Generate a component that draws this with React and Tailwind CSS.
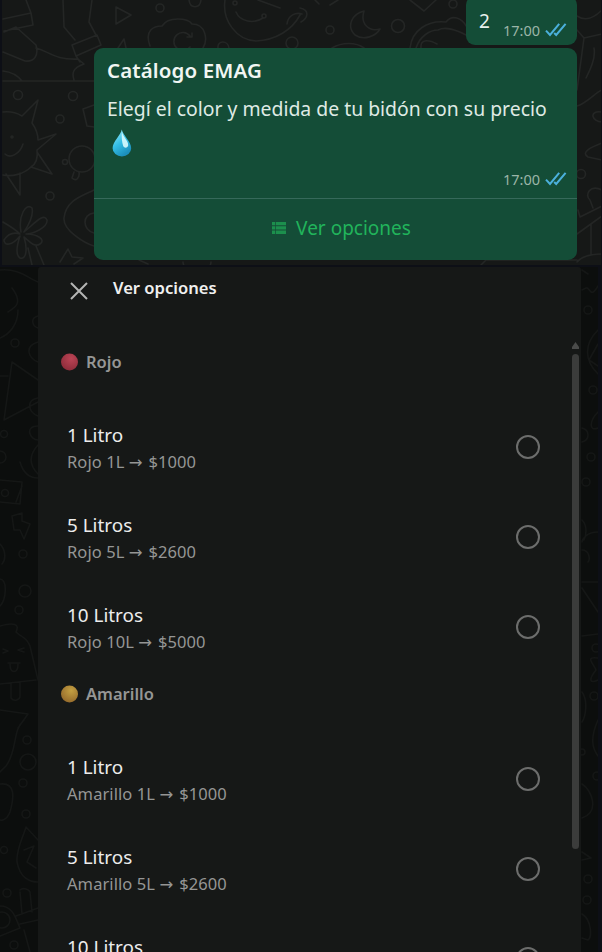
const SECTIONS = [
  {
    name: "Rojo",
    ball: ["#bb4455", "#8c2b39"],
    items: [
      ["1 Litro", "Rojo 1L", "$1000"],
      ["5 Litros", "Rojo 5L", "$2600"],
      ["10 Litros", "Rojo 10L", "$5000"],
    ],
  },
  {
    name: "Amarillo",
    ball: ["#c4a042", "#94692b"],
    items: [
      ["1 Litro", "Amarillo 1L", "$1000"],
      ["5 Litros", "Amarillo 5L", "$2600"],
      ["10 Litros", "Amarillo 10L", "$5000"],
    ],
  },
];

function Checks() {
  return (
    <svg width="22" height="14" viewBox="0 0 22 14" fill="none" stroke="#4bb0dc" strokeWidth="2">
      <path d="M1 7.600 5 12 14.200 .8M9.200 10 11.200 12 20.600 .8" />
    </svg>
  );
}

function Time() {
  return (
    <div className="flex items-center gap-[5px]">
      <span className="text-[14.5px] leading-5 text-[#9bb5a8]">17:00</span>
      <Checks />
    </div>
  );
}

function Drop() {
  return (
    <svg width="20" height="28" viewBox="0 0 20 28">
      <defs>
        <linearGradient id="drop" x1="0" y1="0" x2="0.5" y2="1">
          <stop offset="0" stopColor="#a5eef9" />
          <stop offset="0.55" stopColor="#35bfe6" />
          <stop offset="1" stopColor="#1c8fbb" />
        </linearGradient>
      </defs>
      <path d="M9.800 0.500C9 6 .6 12.500 .6 19.200a9.300 8.200 0 0 0 18.600 0C19.200 12.500 10.600 6 9.800 .5Z" fill="url(#drop)" />
      <path d="M9.900 2.500c.6 5 6.600 9 6.300 13.800-.4 3-3.900 3.300-5 .8-1.200-3.600-1.900-9-1.300-14.600Z" fill="#d9f9fd" opacity=".9" />
    </svg>
  );
}

function Doodles() {
  return (
    <svg className="[grid-area:1/1]" width="602" height="952" viewBox="0 0 602 952" fill="none" strokeWidth="1.6" strokeLinecap="round" strokeLinejoin="round">
      <rect width="602" height="265" fill="#161817" />
      <rect y="265" width="602" height="687" fill="#0c0e0d" />
      <g stroke="#242625">
        <path d="M3 19 31 13 33 25 4 31M31 13 26 0M4 32 16 27 36 45C39 56 34 62 25 61L3 52M63 0 64 27 75 40M92 0 89 22 96 35M72 45 97 35 101 45 76 56ZM76 56 80 62M36 48C50 52 55 60 78 59M78 59 84 64C72 68 72 74 74 80M3 71C12 72 18 76 22 81M3 81H94" />
        <path d="M116 7 131 15 116 24ZM118 48 124 39 126 48M150 46C144 30 154 26 162 26 168 16 188 18 192 24 206 24 208 40 203 48M190 36A9 9 0 1 0 190 47M192 33V37H187M225 0C222 20 236 40 256 41 276 40 292 30 300 15M236 12C240 22 254 24 263 18M258 0 280 8M287 24C288 15 296 12 302 14M218 48C217 40 228 40 229 48" />
        <circle cx="160" cy="8" r="4" /><circle cx="292" cy="43" r="6" /><circle cx="264" cy="16" r="2" /><circle cx="235" cy="3" r="2" /><path d="M189 0C190 9 200 9 201 0" />
        <circle cx="18" cy="95" r="4.500" /><circle cx="73" cy="96" r="4.500" /><circle cx="60" cy="119" r="4" />
        <path d="M3 112C12 111 17 113 22 116L38 100 32 123C37 130 38 136 38 140L56 134 37 150C38 158 36 164 31 167L52 174 37 152M20 195 6 174M20 195 20 173M3 175C12 177 24 174 31 167M5 154C10 159 20 154 23 144M94 105 83 109 87 126 94 127" />
        <circle cx="12" cy="137" r="1" />
        <circle cx="82" cy="159" r="13" /><circle cx="65" cy="162" r="2.500" />
        <path d="M74 172 72 178C76 182 80 178 79 172M94 190C82 196 66 200 64 218 63 230 84 243 94 246M94 213C82 214 82 230 94 233M21 232C18 216 26 202 32 208 34 216 28 226 24 232 34 224 44 212 47 220 48 228 32 234 26 234 38 234 46 240 40 244 34 248 28 240 24 237 28 250 26 260 20 258 14 254 18 242 20 236 12 246 4 246 4 240 8 234 14 232 20 234 14 228 6 224 3 222M28 248 32 265M36 246 44 265M60 262 68 249 72 257 83 258 74 264M183 262A12 8 0 0 0 211 262M139 260 148 264" />
        <circle cx="50" cy="196" r="4" />
        <path d="M364 11C352 14 346 26 355 35 364 41 376 36 380 29 369 32 360 24 364 11ZM410 0 424 11 436 0M300 8C310 10 308 18 301 22M410 48C412 30 428 20 446 22 452 14 462 18 466 26M416 48C420 36 430 30 438 30 446 26 456 30 466 35M437 44C430 40 420 38 421 48M332 48C342 42 356 42 364 48M315 0 319 4M330 5 338 0" />
        <circle cx="398" cy="26" r="6.500" /><circle cx="330" cy="30" r="4" /><circle cx="453" cy="4" r="4" />
        <path d="M577 16C586 22 594 18 602 10M577 30 584 38 602 34M584 38 577 90M594 48C596 58 590 70 586 78M577 106C586 104 596 92 602 90M602 112C588 110 592 122 602 122M602 143C592 147 580 152 588 157L602 160M578 210 580 217 602 206M577 234 602 216M591 224V255M577 262C582 256 592 254 602 254M602 190C590 184 584 195 590 200L593 208M481 265 486 260H577" />
        <circle cx="581" cy="174" r="4.500" />
      </g>
      <g stroke="#151716">
        <path d="M0 270C18 268 28 278 38 282M12 288C24 304 14 308 8 312M18 310C18 324 10 334 0 338M38 316C30 318 32 326 38 328M38 342C24 346 28 358 38 362M12 362 38 380M12 362 4 420 38 402M0 376H8M38 398C26 400 28 412 38 416M38 426C24 426 30 440 38 440M38 445C28 456 30 466 38 474M20 462C24 476 32 478 38 478M0 480 22 482 20 504 0 502M22 486 16 502M12 516 22 513 22 521 30 524 24 539 20 530 14 530ZM0 544C6 550 6 560 2 564M0 579C8 580 6 600 0 606M0 626C14 622 20 624 16 632 22 638 26 636 30 646L38 680M0 684 36 680M3 649 8 651 3 653M24 648 18 650 24 652M8 663H20M10 664C10 674 18 674 18 664M11 684V698C14 702 20 700 20 696V683M0 710 28 714 18 728M24 720C12 730 18 750 6 766L0 772M0 784C16 782 14 798 10 812 6 822 0 820 0 820M26 827C22 840 16 850 17 862 20 878 30 882 38 882M26 827 38 840M24 850 34 846 27 862 36 868M20 890C22 888 28 888 30 892L32 912M20 892 22 914M0 906C14 906 16 920 20 928L0 936M16 916 38 908M20 924 38 920M24 930 30 952" />
        <circle cx="15" cy="343" r="4" /><circle cx="4" cy="434" r="3.500" /><circle cx="0" cy="457" r="6" /><circle cx="5" cy="493" r="3.500" /><circle cx="23" cy="554" r="4" /><circle cx="25" cy="591" r="6" /><circle cx="19" cy="610" r="4" /><circle cx="27" cy="740" r="4" /><circle cx="28" cy="762" r="8" /><circle cx="23" cy="783" r="4" /><circle cx="26" cy="814" r="4" /><circle cx="4" cy="850" r="3.500" /><circle cx="7" cy="893" r="4" /><circle cx="2" cy="920" r="8" /><circle cx="14" cy="945" r="4" />
        <path d="M582 270 588 274M598 286C590 300 590 286 586 288L582 290M598 330C584 344 584 360 598 374M598 344 589 360 598 366M598 428C588 432 590 420 598 412M582 428C590 430 590 440 582 442M582 520C588 526 586 536 584 540M598 532C586 532 582 540 582 542M582 550C590 550 590 560 588 562M582 588 598 612M582 582 598 582M582 636 598 634M598 658C584 656 594 664 596 670 588 680 590 684 598 680M582 692C588 700 586 716 582 722M598 720C590 738 592 748 598 756M582 784C592 790 600 812 582 818M582 852 591 858 582 860M582 914C592 920 592 938 588 940L582 938" />
        <circle cx="588" cy="310" r="4" /><circle cx="593" cy="390" r="4" /><circle cx="591" cy="457" r="4" /><circle cx="586" cy="482" r="4" /><circle cx="596" cy="648" r="4" /><circle cx="594" cy="696" r="4" /><circle cx="582" cy="752" r="3" /><circle cx="597" cy="776" r="4" /><circle cx="588" cy="879" r="4" /><circle cx="587" cy="900" r="4" />
      </g>
      <path d="M0 265H602V267H0Z M0 0H2V265H0Z M601 0H602V267H601Z M598 267H602V952H598Z" fill="#0d0f16" />
    </svg>
  );
}

function Row({ item }) {
  return (
    <div className="flex h-[90px] items-start justify-between pr-[41px] pl-[29px] pt-5">
      <div className="flex flex-col gap-1">
        <span className="text-[18.900px] leading-6 text-[#ececec]">{item[0]}</span>
        <span className="text-[16.500px] leading-[22px] tracking-[0.08px] text-[#959695]">
          {item[1]} <span className="font-['DejaVu_Sans',sans-serif] leading-none tracking-[1.5px]">→</span> {item[2]}
        </span>
      </div>
      <span className="mt-3 size-6 rounded-full border-2 border-[#6c6d6c]" />
    </div>
  );
}

export default function App() {
  return (
    <div className="grid h-[952px] w-[602px] overflow-hidden bg-[#0c0e0d] font-['Noto_Sans',sans-serif]">
      <Doodles />
      <div className="z-10 flex h-[952px] flex-col [grid-area:1/1]">
        <div className="flex h-[267px] flex-col items-end gap-[3px] pr-[25px]">
          <div className="-mt-1 flex h-[49px] w-[111px] items-start justify-between rounded-[9px] bg-[#144d37] pr-[10px] pl-[13px]">
            <span className="mt-[13px] text-[19px] leading-6 text-[#e9f1ed]">2</span>
            <div className="mt-6"><Time /></div>
          </div>
          <div className="flex h-[212px] w-[483px] flex-col rounded-[9px] bg-[#144d37]">
            <div className="flex h-[150px] flex-col px-[13px] pt-[9px]">
              <span className="text-[20.500px] leading-[26px] font-semibold tracking-[0.12px] text-[#f1f6f3]">Catálogo EMAG</span>
              <span className="mt-[13px] text-[19.400px] leading-[26px] whitespace-nowrap text-[#dfeae4]">Elegí el color y medida de tu bidón con su precio</span>
              <div className="mt-[7px] pl-[5px]"><Drop /></div>
              <div className="mt-3 -mr-[3px] self-end"><Time /></div>
            </div>
            <div className="flex flex-1 items-center justify-center gap-[10px] border-t border-[#36695a] pb-[3px] pl-[12px]">
              <svg width="14" height="12" viewBox="0 0 14 12" fill="#1c8f4d">
                <path d="M0 0H3V3.300H0ZM3.700 0H14V3.300H3.700ZM0 4.300H3V7.600H0ZM3.700 4.300H14V7.600H3.700ZM0 8.600H3V12H0ZM3.700 8.600H14V12H3.700Z" />
              </svg>
              <span className="text-[19px] leading-6 text-[#21b45b]">Ver opciones</span>
            </div>
          </div>
        </div>
        <div className="ml-[38px] flex h-[685px] w-[543px] flex-col overflow-hidden rounded-t-[3px] bg-[#161817]">
          <div className="flex h-[74px] shrink-0 items-start pl-8">
            <svg className="mt-[15px]" width="18" height="18" viewBox="0 0 18 18" stroke="#b4b5b4" strokeWidth="2">
              <path d="M1 1 17 17M17 1 1 17" />
            </svg>
            <span className="mt-[9px] ml-[25px] text-[16.600px] leading-6 font-semibold text-[#f0f0f0]">Ver opciones</span>
          </div>
          <div className="flex min-h-0 flex-1">
            <div className="flex flex-1 flex-col overflow-hidden">
              {SECTIONS.map((s) => (
                <div key={s.name} className="flex shrink-0 flex-col">
                  <div className="flex h-[62px] items-start gap-2 pt-[9px] pl-[23px]">
                    <svg className="mt-[3px]" width="17" height="18" viewBox="0 0 17 18">
                      <defs>
                        <radialGradient id={s.name} cx=".6" cy=".3" r=".75">
                          <stop offset="0" stopColor={s.ball[0]} />
                          <stop offset="1" stopColor={s.ball[1]} />
                        </radialGradient>
                      </defs>
                      <circle cx="8.500" cy="9" r="8.500" fill={`url(#${s.name})`} />
                    </svg>
                    <span className="text-[16.500px] leading-6 font-semibold text-[#959695]">{s.name}</span>
                  </div>
                  {s.items.map((item) => <Row key={item[0]} item={item} />)}
                </div>
              ))}
            </div>
            <div className="-ml-[9px] flex w-[9px] flex-col items-start">
              <svg className="mt-px" width="7" height="7" viewBox="0 0 7 7" fill="#4a4b4a"><path d="M3.500 0 7 5V7H0V5Z" /></svg>
              <div className="mt-[5px] h-[495px] w-[7px] rounded-full bg-[#3b3c3b]" />
            </div>
          </div>
        </div>
      </div>
    </div>
  );
}
